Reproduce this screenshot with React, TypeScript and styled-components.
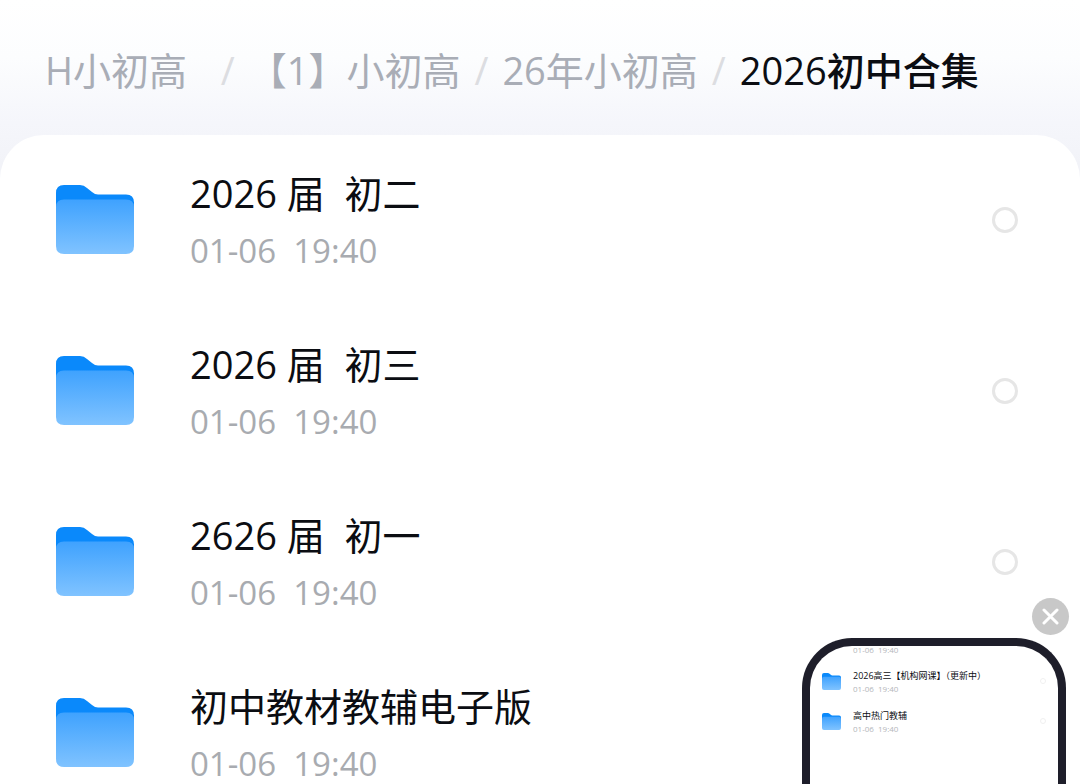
import React from "react";
import styled, { createGlobalStyle } from "styled-components";

const GlobalStyle = createGlobalStyle`
  * { box-sizing: border-box; }
  body {
    margin: 0;
    background: #fff;
    color: #0b0d12;
    font-family: "Open Sans", "Noto Sans CJK SC", sans-serif;
  }
`;

const Page = styled.div`
  position: relative;
  display: flex;
  flex-direction: column;
  height: 100vh;
  overflow: hidden;
  background: #f2f3f8;
`;

const Breadcrumb = styled.nav`
  flex: none;
  padding: 42px 45px 66px;
  background: linear-gradient(#ffffff, #fcfdfe 35%, #f5f6fb 75%, #f2f3f8);
`;

const CrumbList = styled.ol`
  display: flex;
  gap: 14px;
  margin: 0;
  padding: 0;
  list-style: none;
  font-size: 38px;
  line-height: 56px;
  white-space: pre;
`;

const Crumb = styled.li`
  display: flex;
  gap: 14px;
`;

const CrumbLink = styled.a<{ $current?: boolean }>`
  color: ${(p) => (p.$current ? "#0b0d12" : "#a9adb6")};
  font-weight: ${(p) => (p.$current ? 500 : 400)};
  text-decoration: none;
`;

const Slash = styled.span`
  color: #dcdde1;
`;

const Panel = styled.main`
  flex: 1;
  min-height: 0;
  margin-top: -29px;
  overflow: hidden;
  border-radius: 44px 44px 0 0;
  background: #fff;
`;

const FileList = styled.ul`
  margin: 0;
  padding: 0;
  list-style: none;
`;

const FileRow = styled.li`
  display: flex;
  align-items: center;
  gap: 56px;
  height: 171px;
  padding: 0 62px 2px 56px;
`;

const FileInfo = styled.div`
  flex: 1;
  display: flex;
  flex-direction: column;
  gap: 18px;
  white-space: pre;
`;

const FileName = styled.label`
  font-size: 38px;
  line-height: 44px;
`;

const FileTime = styled.time`
  color: #a8abb0;
  font-size: 33px;
  line-height: 36px;
`;

const Pick = styled.input`
  appearance: none;
  width: 26px;
  height: 26px;
  margin: 0;
  border: 3px solid #e6e6e6;
  border-radius: 50%;
  background: #fff;
`;

const Preview = styled.aside`
  position: absolute;
  right: 14px;
  bottom: 0;
  width: 264px;
  height: 146px;
  overflow: hidden;
  border: 8px solid #1e1e2a;
  border-bottom: 0;
  border-radius: 50px 50px 0 0;
  background: #fff;
`;

const MiniTime = styled.time`
  display: block;
  color: #b4b6ba;
  font-size: 8px;
  line-height: 8px;
  white-space: pre;
`;

const MiniClipped = styled.div`
  height: 15px;
  padding-left: 43px;
`;

const MiniRow = styled.li`
  display: flex;
  align-items: center;
  gap: 12px;
  height: 40px;
  padding: 0 12px;
`;

const MiniInfo = styled.div`
  flex: 1;
  display: flex;
  flex-direction: column;
  gap: 2px;
`;

const MiniName = styled.label`
  font-size: 9px;
  line-height: 14px;
  white-space: nowrap;
`;

const MiniPick = styled(Pick)`
  width: 6px;
  height: 6px;
  border: 1px solid #f0f0f0;
`;

const CloseButton = styled.button`
  position: absolute;
  right: 11px;
  bottom: 149px;
  display: flex;
  align-items: center;
  justify-content: center;
  width: 37px;
  height: 37px;
  padding: 0;
  border: 0;
  border-radius: 50%;
  background: #c8c8c8;
`;

const HiddenDefs = styled.svg`
  position: absolute;
`;

const FolderDefs = () => (
  <HiddenDefs width="0" height="0" aria-hidden="true">
    <defs>
      <linearGradient id="front" x1="0" y1="0" x2="0" y2="1">
        <stop offset="0" stopColor="#3fa2fe" />
        <stop offset="1" stopColor="#80c3ff" />
      </linearGradient>
    </defs>
  </HiddenDefs>
);

const Folder = ({ width, height }: { width: number; height: number }) => (
  <svg width={width} height={height} viewBox="0 0 78 69" aria-hidden="true">
    <path
      d="M0 8Q0 0 8 0H24Q28 0 31 3L36 7Q39 9.500 42 9.500H70Q78 9.500 78 17.500V40H0Z"
      fill="#0a89fb"
    />
    <path
      d="M0 22Q0 14.500 8 14.500H70Q78 14.500 78 22V61Q78 69 70 69H8Q0 69 0 61Z"
      fill="url(#front)"
    />
  </svg>
);

const crumbs = ["H小初高  ", "【1】小初高", "26年小初高", "2026初中合集"];

const files = [
  { name: "2026 届  初二", time: "01-06  19:40" },
  { name: "2026 届  初三", time: "01-06  19:40" },
  { name: "2626 届  初一", time: "01-06  19:40" },
  { name: "初中教材教辅电子版", time: "01-06  19:40" },
];

const previewFiles = [
  { name: "2026高三【机构网课】（更新中）", time: "01-06  19:40" },
  { name: "高中热门教辅", time: "01-06  19:40" },
];

export default function App() {
  return (
    <Page lang="zh-CN">
      <GlobalStyle />
      <FolderDefs />
      <Breadcrumb>
        <CrumbList>
          {crumbs.map((name, i) => {
            const current = i === crumbs.length - 1;
            return (
              <Crumb key={name}>
                <CrumbLink
                  href="#"
                  $current={current}
                  aria-current={current ? "page" : undefined}
                >
                  {name}
                </CrumbLink>
                {!current && <Slash aria-hidden="true">/</Slash>}
              </Crumb>
            );
          })}
        </CrumbList>
      </Breadcrumb>
      <Panel>
        <FileList>
          {files.map((file, i) => (
            <FileRow key={file.name}>
              <Folder width={78} height={69} />
              <FileInfo>
                <FileName htmlFor={`file-${i}`}>{file.name}</FileName>
                <FileTime>{file.time}</FileTime>
              </FileInfo>
              <Pick type="checkbox" id={`file-${i}`} />
            </FileRow>
          ))}
        </FileList>
      </Panel>
      <Preview>
        <MiniClipped>
          <MiniTime>01-06  19:40</MiniTime>
        </MiniClipped>
        <FileList>
          {previewFiles.map((file, i) => (
            <MiniRow key={file.name}>
              <Folder width={19} height={17} />
              <MiniInfo>
                <MiniName htmlFor={`preview-${i}`}>{file.name}</MiniName>
                <MiniTime>{file.time}</MiniTime>
              </MiniInfo>
              <MiniPick type="checkbox" id={`preview-${i}`} />
            </MiniRow>
          ))}
        </FileList>
      </Preview>
      <CloseButton type="button" aria-label="关闭">
        <svg width="17" height="17" viewBox="0 0 17 17" aria-hidden="true">
          <path d="M2 2L15 15M15 2L2 15" stroke="#fff" strokeWidth="3" strokeLinecap="round" />
        </svg>
      </CloseButton>
    </Page>
  );
}
